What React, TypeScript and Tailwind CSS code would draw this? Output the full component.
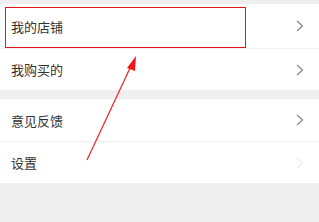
import React from "react";

type Row = { label: string; arrow: "on" | "faint" };

const groups: Row[][] = [
  [
    { label: "我的店铺", arrow: "on" },
    { label: "我购买的", arrow: "on" },
  ],
  [
    { label: "意见反馈", arrow: "on" },
    { label: "设置", arrow: "faint" },
  ],
];

function Chevron({ faint }: { faint?: boolean }) {
  return (
    <svg width="8" height="12" viewBox="0 0 8 12" className={faint ? "opacity-15" : ""}>
      <path d="M1 1 L6.5 6 L1 11" fill="none" stroke="#8a8a8a" strokeWidth="1.3" />
    </svg>
  );
}

export default function App() {
  return (
    <div
      className="relative w-[319px] h-[222px] bg-[#efefef] pt-[4px] overflow-hidden"
      style={{ fontFamily: '"Noto Sans CJK SC", "Liberation Sans", sans-serif' }}
    >
      {groups.map((rows, gi) => (
        <div key={gi} className={`bg-white ${gi > 0 ? "mt-[9px]" : ""}`}>
          {rows.map((row, ri) => (
            <div
              key={row.label}
              className={`flex items-center justify-between pl-[11px] pr-[15px] ${
                ri > 0 ? "border-t border-[#f1f1f1] h-[42px]" : gi === 0 ? "h-[44px]" : "h-[42px]"
              }`}
            >
              <span className="text-[13px] leading-none text-[#333]">{row.label}</span>
              <Chevron faint={row.arrow === "faint"} />
            </div>
          ))}
        </div>
      ))}

      {/* annotation box round the first row */}
      <div className="absolute left-[5px] top-[7px] w-[241px] h-[41px] border border-[#e0161b]" />

      {/* annotation arrow */}
      <svg className="absolute left-0 top-0" width="319" height="222" viewBox="0 0 319 222">
        <line x1="87" y1="160" x2="131" y2="66" stroke="#f02020" strokeWidth="1.2" />
        <polygon points="136,56 127,68 135,71" fill="#f01818" />
      </svg>
    </div>
  );
}
